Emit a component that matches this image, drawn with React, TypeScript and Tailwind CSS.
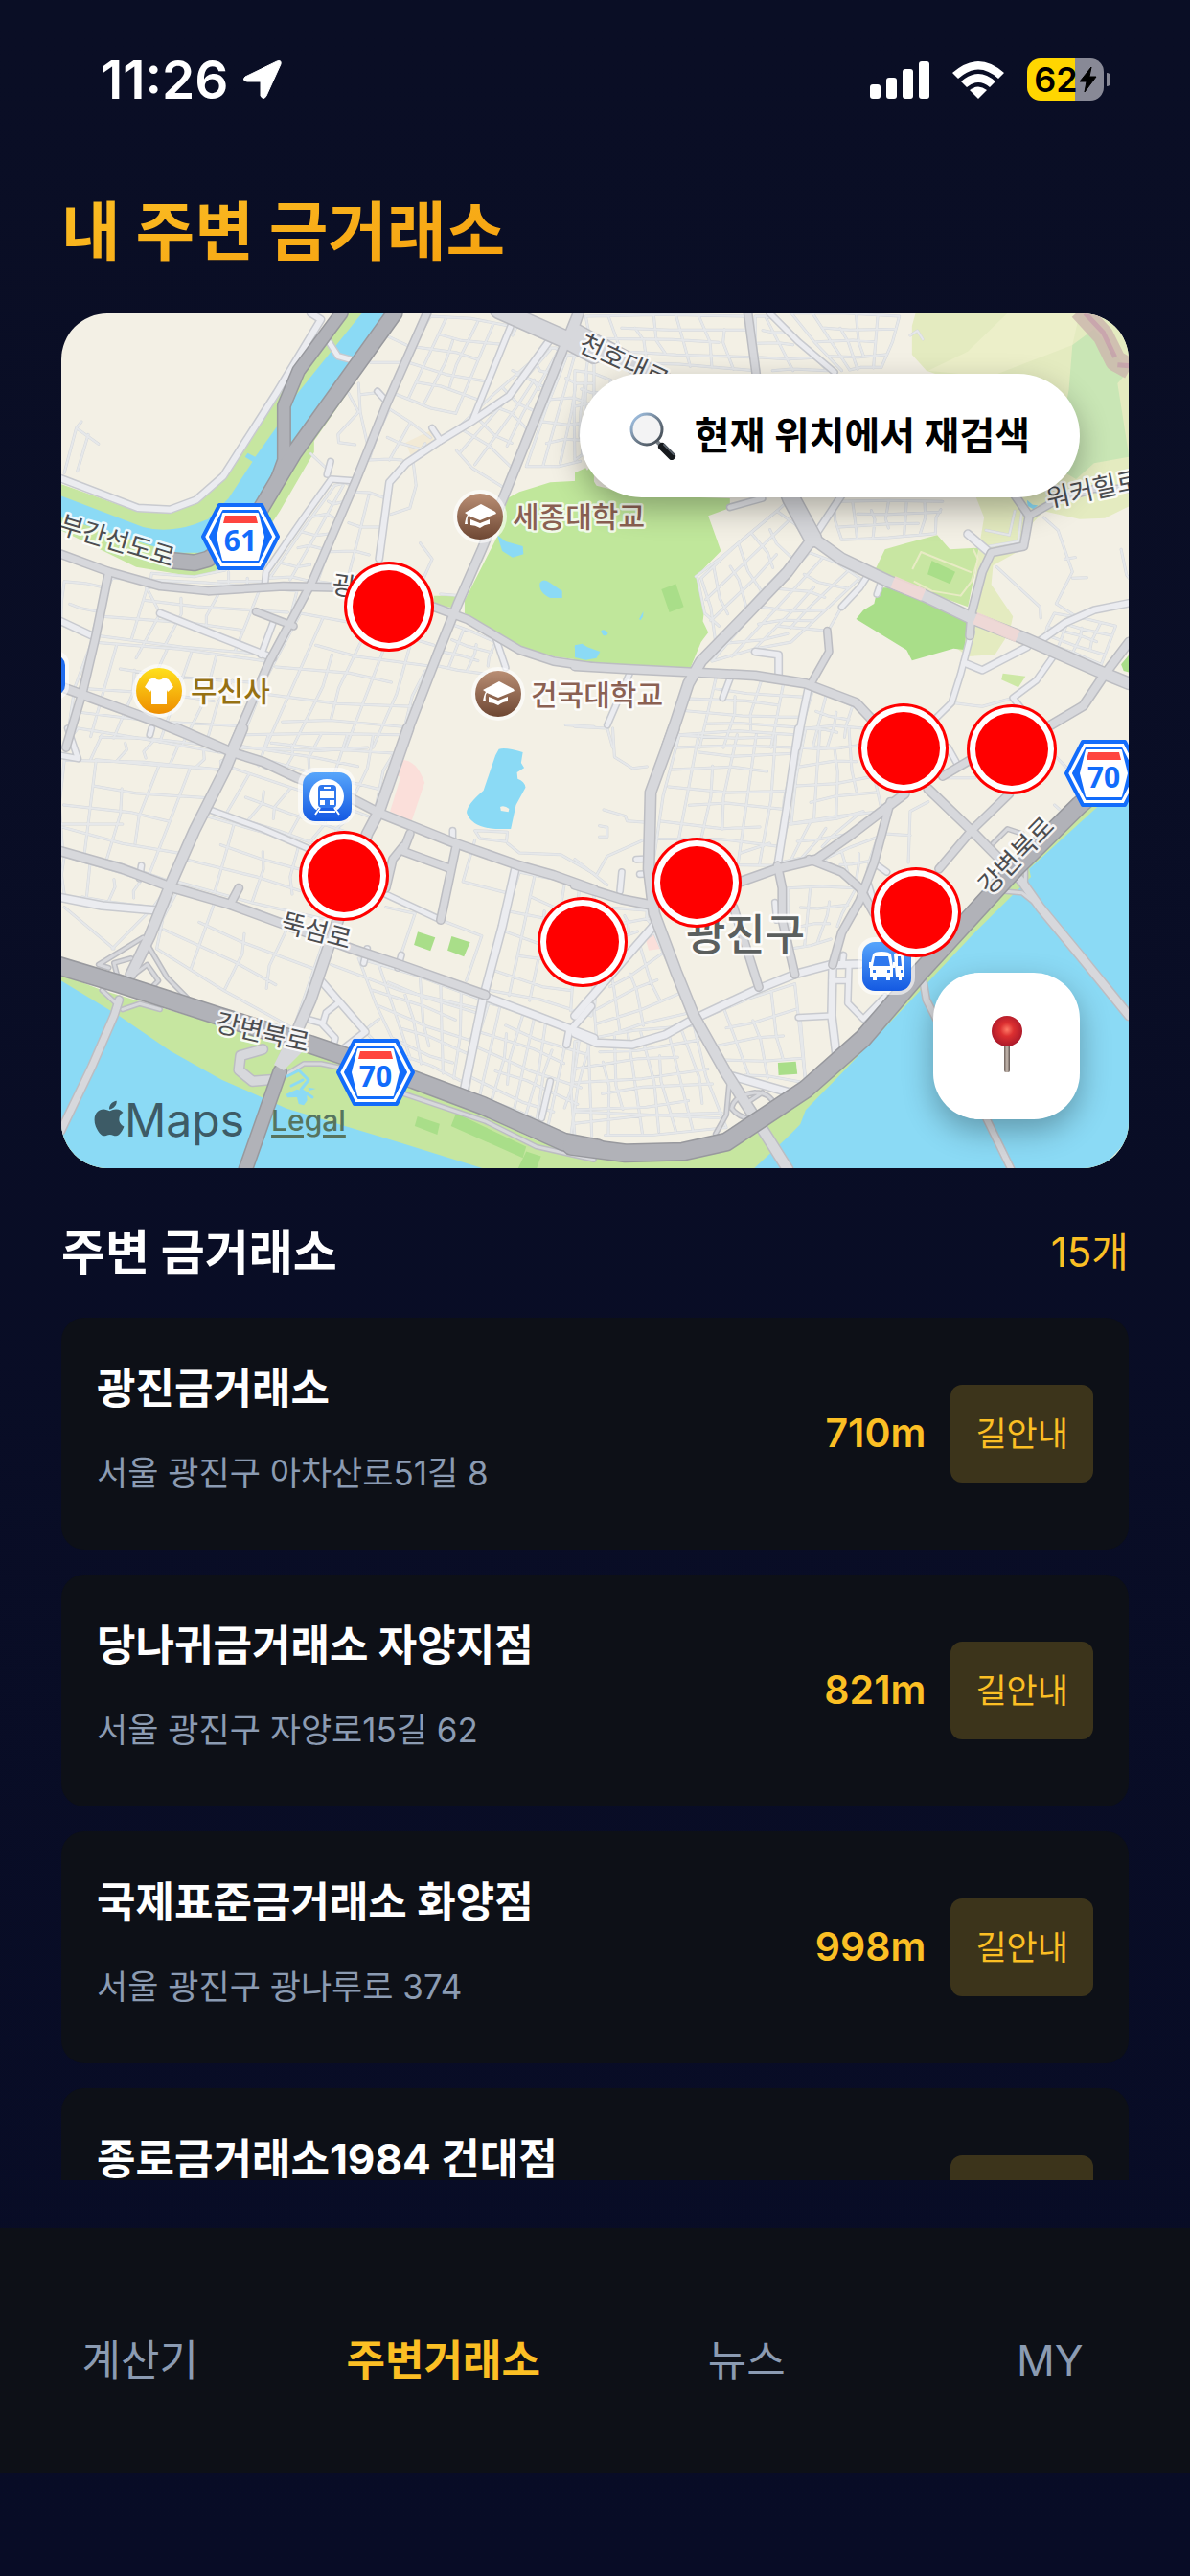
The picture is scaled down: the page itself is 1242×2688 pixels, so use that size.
import { useState } from "react";
import { FaApple } from "react-icons/fa";

type Shop = {
  name: string;
  address: string;
  distance: string;
};

type Road = [path: string, width: number];

// four corners (clockwise), then the number of columns and rows of streets
type Block = [number, number, number, number, number, number, number, number, number, number];

type Tile = {
  id: string;
  transform: string;
  areas: [path: string, color: string][];
  blocks: Block[];
  lanes: string[];
  light: Road[];
  main: Road[];
  highway: Road[];
  special?: [path: string, color: string, width: number][];
};

const SHOPS: Shop[] = [
  { name: "광진금거래소", address: "서울 광진구 아차산로51길 8", distance: "710m" },
  { name: "당나귀금거래소 자양지점", address: "서울 광진구 자양로15길 62", distance: "821m" },
  { name: "국제표준금거래소 화양점", address: "서울 광진구 광나루로 374", distance: "998m" },
  { name: "종로금거래소1984 건대점", address: "", distance: "" },
];

const TABS = ["계산기", "주변거래소", "뉴스", "MY"];

const LAND = "#f3f0e5";
const WATER = "#8bdaf5";
const BANK = "#c6e6a0";
const PARK = "#c0e79b";
const FIELD = "#a9de89";
const PINK = "#fbdfda";

const TILES: Tile[] = [
  {
    id: "nw",
    transform: "translate(-4 -7) scale(0.3571 0.3333)",
    areas: [
      ["M10 555L230 640L330 645L410 610L490 540L650 270L810 20L1010 20L750 420L750 455L650 640L600 720L540 780L460 828L400 845L230 815L10 700Z", BANK],
      ["M10 592L250 690Q320 710 400 682L440 665L500 600L570 485L548 470L556 458L578 470L645 370L680 300L890 20L960 20L680 430L640 530L590 620L440 770L340 770L10 660Z", WATER],
      ["M1568 490L1520 545L1440 550L1350 580L1315 600L1290 710L1190 920L1190 960L1340 1060L1450 1095L1568 1112Z", PARK],
      ["M1100 905L1168 905L1150 942L1100 930Z", BANK],
      ["M1285 715L1310 735L1360 750L1362 775L1330 785L1300 765Z", WATER],
      ["M1410 865Q1420 848 1440 865L1475 890L1475 912L1440 912Q1405 895 1410 865Z", WATER],
      ["M1510 1065L1530 1055L1568 1060L1568 1104L1530 1095Z", WATER],
      ["M1018 425L1090 388L1102 422L1032 464Z", "#f2ead6"],
    ],
    blocks: [
      [20, 860, 140, 880, 100, 1030, 10, 990, 1, 2],
      [160, 850, 700, 890, 620, 1090, 115, 1030, 5, 3],
      [100, 1050, 610, 1110, 500, 1380, 30, 1340, 7, 4],
      [710, 960, 1100, 1060, 1000, 1380, 530, 1380, 6, 5],
      [1090, 30, 1320, 60, 1210, 350, 980, 270, 5, 5],
      [1430, 130, 1470, 150, 1310, 570, 1130, 420, 4, 7],
      [1490, 150, 1568, 180, 1568, 480, 1370, 500, 4, 5],
      [970, 320, 1090, 410, 1030, 480, 910, 480, 2, 2],
      [810, 560, 860, 560, 740, 860, 620, 850, 2, 6],
      [860, 580, 960, 600, 930, 870, 760, 860, 2, 3],
      [1140, 990, 1280, 1050, 1250, 1150, 1090, 1120, 3, 3],
    ],
    lanes: [
      "M20 520L55 380L120 430M55 380L70 360M90 400L58 515",
      "M880 240L885 330L910 450M885 275L945 268M850 270L880 330L820 400L822 425L870 432",
      "M915 175L1025 175M960 90L1040 130M740 460L790 510",
      "M270 880L275 835L400 845L490 825",
      "M1040 490L1048 560L1030 630L975 650M1060 740L1095 790L1070 850M1120 900L1180 905",
      "M260 880L300 960L230 1100M470 860L600 860M500 830L500 880M555 850L555 880",
      "M1330 200L1420 250M1360 20L1330 90M1500 60L1568 90",
      "M1485 1310L1568 1315",
    ],
    light: [
      ["M10 538L235 630L330 635L405 605L485 530L640 270L770 40L740 20", 7],
      ["M790 105L820 155L865 168", 6],
      ["M1435 110L1320 280L1210 360L1110 425L1020 490L970 550L940 790", 7],
      ["M1325 60L1215 350", 6],
      ["M865 545L800 540L720 660L610 830L605 880", 6],
      ["M10 985L110 1035", 7],
      ["M300 960L630 1100", 7],
      ["M630 990L595 1090", 6],
      ["M1280 1035L1310 1130", 6],
      ["M1095 380L1120 420M935 265L965 300M798 485L788 525", 6],
    ],
    main: [
      ["M1290 10L1480 100L1568 150", 18],
      ["M1080 20L960 310L870 550L745 860L700 950L620 1110L510 1380", 8],
      ["M10 775L150 830L300 875L440 890L660 875L850 880L960 900L1100 940L1200 980L1350 1075L1450 1110L1568 1128", 8],
      ["M1520 20L1475 140L1310 580L1240 760L1170 930L1110 1090L1005 1380", 9],
      ["M150 830L110 1040L75 1200L25 1380", 8],
      ["M10 1190L290 1300L470 1380", 9],
      ["M580 955L690 1000", 7],
    ],
    highway: [
      ["M830 20L705 200L662 310L662 480L640 545", 13],
      ["M985 20L690 460L590 640L540 720L440 790L400 802L340 795", 16],
    ],
  },
  {
    id: "ne",
    transform: "translate(536 -7) scale(0.3763 0.3333)",
    areas: [
      ["M945 20L1537 20L1537 625L1470 662L1400 665L1300 640L1260 690L1240 760L1160 810L1155 870L1215 970L1205 1020L1165 1090L1090 1095L1060 1070L1100 940L1120 760L1135 660L1100 560L1050 230L975 200L935 150L935 60Z", "#e4ebc0"],
      ["M1200 20L1400 20L1380 120L1150 220L980 200L1090 140Z", "#ecefc9"],
      ["M1380 120L1440 70L1537 200L1505 240L1537 470L1440 490L1390 540L1330 500L1370 260Z", "#c9e6b5"],
      ["M0 520L30 505L60 560L160 590L430 600L430 630L370 655L405 765L335 845L360 940L355 985L370 1020L350 1050L320 1132L0 1112Z", PARK],
      ["M240 885L280 868L302 940L262 957Z", FIELD],
      ["M0 1060L20 1055L35 1066L70 1080L60 1100L30 1106L0 1098Z", WATER],
      ["M72 1016Q80 1006 92 1022Q88 1034 78 1028Z", WATER],
      ["M178 978L190 954L189 970L182 982Z", WATER],
      ["M860 760L920 740L1005 715L1040 760L1120 755L1110 830L1090 940L1030 915L960 885L830 830Z", "#c8e6a2"],
      ["M990 795L1055 830L1040 868L978 838Z", FIELD],
      ["M840 880L900 880L960 905L1090 970L1080 1074L1050 1070L935 1108L920 1075L780 978L800 950L830 930Z", FIELD],
      ["M1187 1148L1250 1157L1230 1192L1183 1168Z", "#cde8a5"],
      ["M1254 605L1270 620L1284 622L1272 634L1256 624Z", WATER],
      ["M1537 1090L1515 1120L1522 1140L1537 1145Z", FIELD],
    ],
    blocks: [
      [30, 30, 470, 30, 500, 200, 80, 170, 7, 4],
      [500, 30, 560, 40, 700, 200, 510, 200, 2, 4],
      [600, 20, 900, 30, 850, 190, 740, 200, 5, 4],
      [0, 200, 100, 230, 60, 420, 0, 480, 3, 5],
      [560, 640, 650, 740, 390, 1050, 350, 850, 3, 6],
      [650, 770, 790, 850, 600, 1050, 380, 1110, 4, 6],
      [720, 610, 1020, 610, 1000, 710, 740, 730, 6, 3],
      [330, 1150, 640, 1190, 610, 1380, 280, 1380, 5, 6],
      [660, 1200, 770, 1250, 740, 1380, 620, 1380, 3, 3],
      [1330, 960, 1500, 1000, 1460, 1120, 1300, 1050, 4, 4],
    ],
    lanes: [
      "M340 850L360 960L400 1000M335 845L400 790L560 640L640 560",
      "M1300 660L1340 700L1380 830L1335 930L1390 970M1170 815L1290 940L1292 975M1360 790L1388 785M1380 850L1420 848M1515 760L1530 840L1537 850",
      "M930 90L950 75L965 102M740 940L700 1020M560 1000L700 1015",
      "M0 1315L90 1320L105 1380M1045 1240L1130 1252L1215 1225",
      "M1140 700L1205 715L1220 640M1150 750L1230 735L1240 640",
    ],
    light: [
      ["M540 20L620 110L720 205", 6],
      ["M670 710L740 590", 7],
      ["M430 628L520 600", 6],
      ["M1090 712L1150 770", 8],
      ["M1080 1115L1130 1138L1255 1065", 7],
      ["M1325 1098L1280 1170L1215 1225L1240 1260", 6],
      ["M1285 1050L1360 990L1440 950L1537 928", 7],
      ["M812 842L790 880L740 940M850 860L838 900", 6],
      ["M500 1080L565 1090L565 1160", 7],
      ["M430 1165L410 1225M155 1140L90 1310", 6],
      ["M650 1180L630 1290L615 1380", 7],
      ["M1100 1020L1070 1150L1045 1240L1000 1290", 6],
    ],
    main: [
      ["M0 80L260 240L560 480L600 600L660 725", 18],
      ["M480 20L505 230", 8],
      ["M0 70L15 20", 7],
      ["M660 725L590 830L480 960L350 1110L315 1180L280 1300L255 1380", 11],
      ["M660 725L740 790L870 860L970 905L1090 970L1250 1040L1450 1140L1537 1180", 12],
      ["M0 1125L150 1135L330 1145L500 1155L640 1180L780 1240L830 1300", 9],
      ["M1100 960L1130 830L1155 770L1245 750L1260 655L1220 590", 8],
      ["M1260 655L1330 610L1440 570L1537 570", 7],
      ["M1100 960L1095 1030", 8],
      ["M1537 1050L1470 1150L1410 1250L1320 1310", 9],
      ["M700 1015L705 1080L655 1180", 7],
    ],
    highway: [],
    special: [
      ["M1400 10L1465 90L1500 170L1540 195", "#cdb9ae", 22],
      ["M1415 20L1465 80L1498 158M1505 182L1537 185", "#c59aaa", 5],
      ["M882 862L967 902M1110 975L1228 1032", "#f3d9d5", 13],
      ["M936 822L960 768L1100 832M1105 760L1118 790L1100 860L1070 905L990 890L940 860", "#eeeccb", 2],
    ],
  },
  {
    id: "sw",
    transform: "translate(-4 433) scale(0.3571 0.3333)",
    areas: [
      ["M10 770L130 820L700 1000L1100 1140L1400 1290L1568 1350L1568 1380L10 1380Z", BANK],
      ["M10 790L180 900L330 1010L480 1100L670 1190L980 1290L1250 1380L10 1380Z", WATER],
      ["M1165 1205L1370 1310L1360 1345L1150 1245Z", FIELD],
      ["M1052 1215L1117 1238L1110 1272L1044 1245Z", FIELD],
      ["M1370 1325L1413 1340L1400 1380L1345 1380Z", FIELD],
      ["M1053 637L1104 655L1090 697L1042 678Z", FIELD],
      ["M1152 651L1206 670L1188 715L1140 695Z", FIELD],
      ["M1005 98Q1050 98 1073 170L1035 290L972 260L1003 152L988 145Z", PINK],
      ["M1290 65Q1310 58 1360 75L1355 108L1364 124L1343 138L1345 158Q1365 165 1368 185L1340 240L1325 315L1280 315Q1210 310 1196 265Q1195 240 1245 195L1280 85Z", WATER],
      ["M1294 246Q1306 240 1320 252L1318 262L1296 258Z", LAND],
      ["M668 1145L700 1130L728 1140L730 1165L720 1180L705 1176L700 1155L672 1156Z", WATER],
      ["M732 1124L755 1128L736 1134Z", WATER],
    ],
    blocks: [
      [60, 0, 500, 80, 480, 130, 20, 90, 6, 1],
      [20, 100, 480, 130, 330, 480, 15, 380, 5, 4],
      [540, 20, 1000, 20, 930, 250, 520, 90, 6, 4],
      [500, 120, 920, 280, 860, 400, 430, 250, 7, 2],
      [420, 270, 800, 400, 790, 600, 350, 480, 4, 3],
      [20, 400, 320, 500, 280, 560, 20, 520, 4, 1],
      [350, 510, 780, 660, 690, 940, 290, 690, 4, 3],
      [880, 720, 1240, 850, 1190, 1110, 1000, 1020, 6, 6],
      [1260, 860, 1560, 970, 1500, 1280, 1200, 1140, 9, 6],
      [1350, 450, 1568, 520, 1560, 900, 1260, 820, 5, 6],
    ],
    lanes: [
      "M20 560L165 690M280 560L160 690M10 300L190 300M1220 320L1315 325L1312 355L1235 345ZM1220 350L1185 480L1330 520",
      "M1315 360L1350 390L1470 395L1568 455M1120 600L1240 650M1240 650L1195 790",
      "M800 740L1000 820L1240 880M940 910L880 960M900 950L1000 1060",
      "M960 560L1045 580L1000 720",
    ],
    light: [
      ["M445 255L600 315L730 375", 6],
      ["M960 520L1120 600", 6],
      ["M10 530L130 555L290 570", 8],
      ["M770 790L900 950L840 1000", 7],
      ["M820 860L785 890L775 925M730 910L770 922L812 970L805 1000", 6],
      ["M1338 440L1300 620L1245 840L1190 1125", 8],
      ["M1250 840L1400 900L1568 970", 8],
      ["M1560 870L1495 950L1488 990", 7],
      ["M10 85L60 95L30 0M275 0L270 20M1155 320L1155 355", 6],
      ["M905 690L895 735M1005 710L995 750M245 430L240 470", 6],
      ["M1440 1105L1415 1220", 6],
    ],
    main: [
      ["M350 0L510 75L600 105L700 155L860 220L940 265L1150 355L1350 430L1450 460L1568 505", 9],
      ["M540 0L490 130L400 320L330 490L270 650L215 770", 11],
      ["M10 385L190 440L340 500L500 550L640 605L860 690L1000 740L1250 835", 9],
      ["M1025 0L940 260L905 330L860 480L800 660L740 850L695 960L660 1040", 11],
      ["M1030 330L1010 385L1150 440M1010 370L980 410L960 500M1165 370L1120 600", 8],
      ["M530 500L505 550", 8],
      ["M250 655L120 740L150 750M215 720L165 735L175 775L215 790M225 770L262 740L295 790L275 812M265 680L320 780L380 845", 4],
      ["M180 850L165 900L100 1060L10 1260", 8],
      ["M130 820L170 860M300 880L240 862L190 880", 4],
      ["M600 1005L535 1025L530 1070L570 1105L625 1100", 10],
      ["M660 1090L720 1050L770 1050L860 1070M1000 1140L1250 1230L1400 1310L1568 1350", 4],
    ],
    highway: [
      ["M0 742L180 800L470 900L740 990L1040 1100L1240 1180L1480 1295L1580 1315", 18],
      ["M650 1075L550 1380", 14],
    ],
  },
  {
    id: "se",
    transform: "translate(536 433) scale(0.3763 0.3333)",
    areas: [
      ["M1400 200L1537 100L1537 1380L0 1380L0 1330L430 1290L700 1060Z", BANK],
      ["M1450 245L1537 150L1537 1380L495 1380L590 1280L625 1240L640 1195L740 1080L950 830L1100 650L1265 465L1260 440Z", WATER],
      ["M1537 1285L1500 1330L1470 1365L1537 1380Z", "#f0edcf"],
      ["M222 635L237 690L205 695L196 660Z", PINK],
      ["M563 1047L613 1043L617 1082L565 1086Z", FIELD],
    ],
    blocks: [
      [290, 20, 610, 20, 570, 430, 220, 400, 6, 7],
      [640, 0, 800, 0, 850, 250, 600, 300, 4, 5],
      [590, 300, 850, 260, 680, 400, 570, 420, 4, 2],
      [0, 980, 330, 930, 420, 1250, 0, 1280, 9, 7],
      [60, 790, 220, 640, 320, 890, 60, 970, 4, 4],
      [350, 910, 610, 800, 640, 1110, 430, 1080, 4, 4],
      [590, 500, 780, 500, 710, 660, 600, 690, 3, 3],
      [690, 410, 840, 340, 800, 490, 740, 450, 3, 2],
      [0, 560, 200, 570, 210, 620, 30, 700, 3, 2],
    ],
    lanes: [
      "M105 0L110 90L160 125L200 120M80 255L140 275L145 290L200 295M68 305L90 310L90 340L68 340M60 460L90 400L190 350M0 410L90 490",
      "M925 420L930 260L980 230M860 330L930 335M1020 155L1110 155M1335 90L1370 130M1330 240L1345 255",
      "M460 390L540 360M0 1200L400 1220M640 1110L625 905",
    ],
    light: [
      ["M620 0L590 230L562 430", 7],
      ["M0 955L60 985L160 990L250 960L330 910L500 820L610 770L710 740L790 738", 8],
      ["M225 610L0 900", 8],
      ["M715 740L712 900L725 1020", 8],
      ["M620 905L712 900M712 790L755 790", 6],
      ["M130 450L125 510M170 410L205 408M180 457L205 455", 6],
      ["M760 745L757 860L800 910L860 840", 6],
      ["M440 1090L610 1145", 8],
      ["M815 490L835 570M840 430L865 450M745 710L742 740", 6],
      ["M1035 60L1060 110", 6],
      ["M555 545L560 600", 6],
    ],
    main: [
      ["M275 0L210 200L205 440L220 580L280 760L330 900L420 1080L500 1220L540 1290L590 1380", 11],
      ["M0 490L130 535L220 555", 9],
      ["M915 205L770 330L670 410L560 440L460 480", 9],
      ["M562 430L575 500L575 600L610 770", 8],
      ["M875 230L830 420L790 540L740 640L715 740", 8],
      ["M650 410L740 450L790 500L830 580", 8],
      ["M440 560L510 810", 8],
      ["M980 190L1100 320L1240 480L1290 560L1400 710L1537 900", 9],
      ["M1205 205L1100 320L1010 440", 8],
      ["M1020 150L1095 100", 8],
      ["M965 785L975 850L1080 1080L1210 1380", 7],
      ["M430 1090L420 1210L390 1270M500 1140Q440 1150 435 1190Q450 1215 490 1225M500 1140Q540 1140 555 1180M480 1170L520 1140", 4],
      ["M1160 360L1200 315L1240 330M1190 510L1240 515L1290 560M1250 420L1250 500", 4],
    ],
    highway: [
      ["M1545 100L1400 240L1220 440L960 760L800 970L640 1130L500 1235L420 1295L300 1325L140 1330L-10 1308", 18],
    ],
  },
];

const PINS = [
  [342, 306],
  [295, 587],
  [544, 656],
  [663, 594],
  [879, 454],
  [992, 455],
  [892, 625],
];

const ROAD_LABELS = [
  { text: "부간선도로", x: 58, y: 238, angle: 17 },
  { text: "천호대로", x: 587, y: 51, angle: 25 },
  { text: "뚝섬로", x: 266, y: 645, angle: 15 },
  { text: "강변북로", x: 210, y: 751, angle: 13 },
  { text: "강변북로", x: 997, y: 566, angle: -46 },
  { text: "워커힐로", x: 1077, y: 184, angle: -12 },
  { text: "광나루로", x: 332, y: 290, angle: 8 },
];

function blockPath([ax, ay, bx, by, cx, cy, dx, dy, cols, rows]: Block) {
  const at = (u: number, v: number) => {
    const x = (1 - v) * ((1 - u) * ax + u * bx) + v * ((1 - u) * dx + u * cx);
    const y = (1 - v) * ((1 - u) * ay + u * by) + v * ((1 - u) * dy + u * cy);
    return `${Math.round(x)} ${Math.round(y)}`;
  };
  let d = "";

  for (let i = 0; i <= cols; i++) {
    const u = i / cols;
    const bend = ((i % 3) - 1) * 0.03;
    d += `M${at(u, i % 4 === 2 ? 0.25 : 0)}L${at(u + bend, 0.5)}L${at(u, i % 5 === 3 ? 0.75 : 1)}`;
  }
  for (let j = 0; j <= rows; j++) {
    const v = j / rows;
    const bend = ((j % 2) - 0.5) * 0.06;
    d += `M${at(j % 3 === 1 ? 0.2 : 0, v)}L${at(0.5, v + bend)}L${at(j % 3 === 2 ? 0.8 : 1, v)}`;
  }
  return d;
}

function Roads({ pick, fill, edge }: { pick: (tile: Tile) => Road[]; fill: string; edge: string }) {
  return (
    <>
      {[edge, fill].map((color, pass) =>
        TILES.map((tile) => (
          <g key={`${tile.id}-${pass}`} transform={tile.transform} stroke={color}>
            {pick(tile).map(([d, width]) => (
              <path key={d} d={d} strokeWidth={pass === 0 ? width + 2 : width - 1} vectorEffect="non-scaling-stroke" />
            ))}
          </g>
        ))
      )}
    </>
  );
}

function Shield({ x, y, label }: { x: number; y: number; label: string }) {
  return (
    <g transform={`translate(${x} ${y})`} strokeLinejoin="round">
      <path d="M-39 0L-22 -33H22L39 0L22 33H-22Z" fill="#fff" stroke="#126cfb" strokeWidth="4" />
      <path d="M-32 0L-18 -27H18L32 0L18 27H-18Z" fill="#126cfb" stroke="#126cfb" strokeWidth="2" />
      <path d="M-24 0L-18 -24H18L24 0L18 24H-18Z" fill="#fff" stroke="#fff" strokeWidth="2" />
      <path d="M-16 -22H16L18 -14H-18Z" fill="#ff453f" />
      <text y="15" textAnchor="middle" fill="#126cfb" className="font-['Open_Sans',sans-serif] text-[30px] font-bold">
        {label}
      </text>
    </g>
  );
}

function SchoolIcon({ x, y }: { x: number; y: number }) {
  return (
    <g transform={`translate(${x} ${y})`}>
      <circle r="28" fill="#fff" opacity="0.6" />
      <circle r="24" fill="url(#school)" />
      <path d="M-16 -4L1 -13L16 -5L17 -3L0 4L-12 -1Q-14 1 -13 8H-16Q-15 1 -13 -2Z" fill="#fff" />
      <path d="M-10 3L0 7L10 3V8Q5 8 0 12Q-5 9 -10 9Z" fill="#fff" />
    </g>
  );
}

function TransitBox({ x, y }: { x: number; y: number }) {
  return (
    <>
      <rect x={x - 30} y={y - 30} width="60" height="60" rx="18" fill="#fff" opacity="0.6" />
      <rect x={x - 25} y={y - 25} width="51" height="51" rx="13" fill="url(#transit)" />
    </>
  );
}

function MapCanvas() {
  return (
    <svg viewBox="0 0 1114 892" preserveAspectRatio="xMidYMid slice" className="block h-full w-full" aria-hidden="true">
      <defs>
        <linearGradient id="school" x1="0" y1="0" x2="0" y2="1">
          <stop offset="0" stopColor="#b98e74" />
          <stop offset="1" stopColor="#6e4733" />
        </linearGradient>
        <linearGradient id="store" x1="0" y1="0" x2="0" y2="1">
          <stop offset="0" stopColor="#ffe01c" />
          <stop offset="1" stopColor="#ee8d00" />
        </linearGradient>
        <linearGradient id="transit" x1="0" y1="0" x2="0" y2="1">
          <stop offset="0" stopColor="#57a5fb" />
          <stop offset="1" stopColor="#1459e2" />
        </linearGradient>
      </defs>
      <rect width="1114" height="892" fill={LAND} />

      {TILES.map((tile) => (
        <g key={tile.id} transform={tile.transform}>
          {tile.areas.map(([d, color]) => (
            <path key={d} d={d} fill={color} />
          ))}
        </g>
      ))}

      <g fill="none" strokeLinejoin="round" strokeLinecap="round">
        {["#d5d8dc", "#e6e8ea"].map((color, pass) =>
          TILES.map((tile) => (
            <g key={`${tile.id}-${pass}`} transform={tile.transform} stroke={color}>
              {[...tile.blocks.map(blockPath), ...tile.lanes].map((d) => (
                <path key={d} d={d} strokeWidth={pass === 0 ? 3 : 2} vectorEffect="non-scaling-stroke" />
              ))}
            </g>
          ))
        )}
        <Roads pick={(tile) => tile.light} fill="#ebecf0" edge="#c8cacf" />
        <Roads pick={(tile) => tile.main} fill="#d7d8dc" edge="#bcbdc2" />
        {TILES.map((tile) => (
          <g key={tile.id} transform={tile.transform} opacity="0.85">
            {tile.special?.map(([d, color, width]) => (
              <path key={d} d={d} stroke={color} strokeWidth={width} strokeLinecap="butt" vectorEffect="non-scaling-stroke" />
            ))}
          </g>
        ))}
        <Roads pick={(tile) => tile.highway} fill="#b1b2b8" edge="#98999e" />
        <path d="M236 796L248 790L258 800L250 810L262 818M240 806L252 800" stroke={WATER} strokeWidth="3" />
        <path d="M222 784L240 748L258 764L232 790Z" fill="#d7d8dc" />
      </g>

      <g paintOrder="stroke" stroke="#fff" strokeOpacity="0.85" strokeWidth="5" strokeLinejoin="round" textAnchor="middle">
        {ROAD_LABELS.map(({ text, x, y, angle }) => (
          <text
            key={`${text}-${x}`}
            x={x}
            y={y}
            dy="9"
            transform={`rotate(${angle} ${x} ${y})`}
            fill="#4c4d50"
            className="text-[27px]"
          >
            {text}
          </text>
        ))}
        <text x="714" y="665" fill="#5b5f5e" className="text-[45px] font-medium">
          광진구
        </text>
      </g>

      <g paintOrder="stroke" stroke="#fff" strokeOpacity="0.8" strokeWidth="5" strokeLinejoin="round" className="text-[30px] font-medium">
        <text x="471" y="223" fill="#8a6052">세종대학교</text>
        <text x="490" y="409" fill="#8a6052">건국대학교</text>
        <text x="135" y="405" fill="#967113">무신사</text>
      </g>

      <SchoolIcon x={437} y={212} />
      <SchoolIcon x={456} y={397} />
      <circle cx="102" cy="394" r="28" fill="#fff" opacity="0.6" />
      <circle cx="102" cy="394" r="24" fill="url(#store)" />
      <path d="M97 380Q102 385 107 380L112 382L117 390L111 395L110 393V408H94V393L93 395L87 390L92 382Z" fill="#fff" />

      <rect x="-40" y="352" width="48" height="51" rx="14" fill="#fff" opacity="0.6" />
      <rect x="-40" y="357" width="44" height="41" rx="10" fill="#1f6bee" />

      <TransitBox x={277} y={504} />
      <circle cx="277" cy="504" r="18" fill="#fff" />
      <path d="M261 526L268 516H286L293 526Z" fill="#1d61e6" />
      <rect x="268" y="492" width="19" height="24" rx="4" fill="#3078ee" />
      <path d="M274 494H281V496H274ZM270 498H285V506H270Z" fill="#fff" />
      <path d="M271 509H274V512H271ZM281 509H284V512H281ZM270 516L265 523M285 516L290 523M269 520H286" fill="#fff" stroke="#fff" strokeWidth="2" />

      <TransitBox x={861} y={681} />
      <path
        d="M869 669Q870 667 874 667Q878 668 879 671L880 683V692H877V696H874V692H871Z"
        fill="#fff"
      />
      <path d="M847 669Q848 666 856 666Q864 666 866 669L868 681V692H865V696H861V692H851V696H847V692H844V681ZM843 677H845V683H843ZM868 677H870V683H868Z" fill="#fff" />
      <path d="M849 671H863L865 681H847ZM847 685H850V688H847ZM862 685H865V688H862ZM873 671H876L877 681H873ZM876 685H878V688H876Z" fill="#2f78ee" />

      <Shield x={187} y={233} label="61" />
      <Shield x={328} y={792} label="70" />
      <Shield x={1088} y={480} label="70" />

      {PINS.map(([x, y]) => (
        <g key={`${x}-${y}`}>
          <circle cx={x} cy={y} r="47" fill="#f00" />
          <circle cx={x} cy={y} r="44" fill="#fff" />
          <circle cx={x} cy={y} r="38" fill="#f00" />
        </g>
      ))}
    </svg>
  );
}

function MagnifierIcon() {
  return (
    <svg viewBox="0 0 50 50" className="size-[50px]" aria-hidden="true">
      <defs>
        <linearGradient id="rim" x1="0" y1="0" x2="1" y2="1">
          <stop offset="0" stopColor="#a9cdf2" />
          <stop offset="0.5" stopColor="#6f7f90" />
          <stop offset="1" stopColor="#3c4248" />
        </linearGradient>
      </defs>
      <path d="M29 31L33 35" stroke="#7b8288" strokeWidth="4" />
      <path d="M34 36L44 46" stroke="#16191d" strokeWidth="8" strokeLinecap="round" />
      <path d="M36 34L46 44" stroke="#59616b" strokeWidth="2" strokeLinecap="round" />
      <circle cx="18" cy="18" r="16" fill="#f3f3f4" stroke="url(#rim)" strokeWidth="3" />
    </svg>
  );
}

function PinIcon() {
  return (
    <svg viewBox="0 0 32 66" className="h-[66px] w-8" aria-hidden="true">
      <defs>
        <radialGradient id="ball" cx="0.5" cy="0.45" r="0.55">
          <stop offset="0" stopColor="#ff7a66" />
          <stop offset="0.4" stopColor="#dc2f30" />
          <stop offset="1" stopColor="#a9182a" />
        </radialGradient>
        <linearGradient id="needle" x1="0" y1="0" x2="1" y2="0">
          <stop offset="0" stopColor="#6d605a" />
          <stop offset="0.5" stopColor="#c9bcb2" />
          <stop offset="1" stopColor="#5f5450" />
        </linearGradient>
      </defs>
      <rect x="13" y="30" width="6" height="30" rx="2" fill="url(#needle)" />
      <circle cx="16" cy="17" r="16" fill="url(#ball)" />
    </svg>
  );
}

function StatusBar() {
  return (
    <div className="flex h-[166px] shrink-0 items-center justify-between pr-[83px] pl-[105px]">
      <div className="flex items-center gap-[14px]">
        <span className="text-[55px] leading-none font-semibold">11:26</span>
        <svg viewBox="0 0 42 42" className="size-[42px]" aria-hidden="true">
          <path
            d="M3 18L36 2Q41 0 40 5L25 38Q22 43 19 38V23H5Q-1 22 3 18Z"
            fill="#fff"
            stroke="#fff"
            strokeLinejoin="round"
          />
        </svg>
      </div>

      <div className="flex items-center gap-6">
        <svg viewBox="0 0 62 40" className="h-10 w-[62px]" fill="#fff" aria-hidden="true">
          <rect x="0" y="25" width="11" height="15" rx="3" />
          <rect x="17" y="18" width="11" height="22" rx="3" />
          <rect x="34" y="9" width="11" height="31" rx="3" />
          <rect x="51" y="1" width="11" height="39" rx="3" />
        </svg>
        <svg viewBox="0 0 54 40" className="h-10 w-[54px]" fill="#fff" aria-hidden="true">
          <path d="M0 13Q27 -11 54 13L48 19Q27 0 6 19Z" />
          <path d="M9 22Q27 6 45 22L39 28Q27 18 15 28Z" />
          <path d="M18 31Q27 24 36 31L27 40Z" />
        </svg>
        <div className="flex items-center gap-[3px]">
          <div className="flex h-11 w-20 items-center justify-center gap-px rounded-[14px] bg-[linear-gradient(90deg,#ffd600_62%,#888996_62%)] text-black">
            <span className="text-[36px] leading-none font-semibold">62</span>
            <svg viewBox="0 0 19 28" className="h-7 w-[19px]" aria-hidden="true">
              <path d="M13 1L1 16H8L6 27L18 11H11Z" stroke="#000" strokeLinejoin="round" />
            </svg>
          </div>
          <div className="h-[14px] w-1 rounded-r-full bg-[#888996]" />
        </div>
      </div>
    </div>
  );
}

export default function App() {
  const [activeTab, setActiveTab] = useState("주변거래소");

  return (
    <div className="flex h-screen flex-col bg-gradient-to-b from-[#0a0e25] to-[#080c26] font-['Inter','Noto_Sans_CJK_KR',sans-serif] text-white">
      <StatusBar />

      <main className="flex min-h-0 flex-1 flex-col px-16">
        <h1 className="mt-[26px] mb-[35px] w-fit bg-gradient-to-br from-[#fbbf24] to-[#f59e0b] bg-clip-text text-[67px] leading-[100px] font-bold text-transparent">
          내 주변 금거래소
        </h1>

        <section className="relative aspect-[1114/892] w-full shrink-0 overflow-hidden rounded-[48px]">
          <MapCanvas />

          <button
            type="button"
            className="absolute top-[63px] right-[51px] flex h-[129px] items-center gap-[18px] rounded-full bg-white px-[52px] text-[40px] font-bold whitespace-nowrap text-black shadow-[0_12px_32px_rgba(0,0,0,0.3)]"
          >
            <MagnifierIcon />
            현재 위치에서 재검색
          </button>

          <button
            type="button"
            aria-label="내 위치"
            className="absolute right-[51px] bottom-[51px] flex size-[153px] items-center justify-center rounded-[48px] bg-white shadow-[0_12px_32px_rgba(0,0,0,0.3)]"
          >
            <PinIcon />
          </button>

          <div className="absolute bottom-[20px] left-[34px] flex items-center gap-7 text-[#3d5b66]">
            <span className="flex items-center text-[48px] leading-[60px]">
              <FaApple className="mb-1 h-[42px] w-8" aria-hidden="true" />
              Maps
            </span>
            <a href="#legal" className="text-[30px] font-medium text-[#56745f] underline decoration-[3px] underline-offset-4">
              Legal
            </a>
          </div>
        </section>

        <div className="mt-[58px] mb-[38px] flex shrink-0 items-center justify-between leading-[60px]">
          <h2 className="text-[50px] font-bold">주변 금거래소</h2>
          <p className="text-[42px] text-[#fbbf24]">15개</p>
        </div>

        <ul className="flex min-h-0 flex-1 flex-col gap-[26px] overflow-y-auto [scrollbar-width:none]">
          {SHOPS.map((shop) => (
            <li
              key={shop.name}
              className="flex shrink-0 items-center justify-between rounded-3xl bg-[#0d1017] px-[37px] py-[50px]"
            >
              <div>
                <h3 className="mb-[34px] text-[44px] leading-[48px] font-bold">{shop.name}</h3>
                <p className="min-h-[60px] text-[35px] leading-[60px] text-[#8b9bb2]">{shop.address}</p>
              </div>

              <div className="flex items-center gap-[26px]">
                <span className="text-[41px] font-semibold text-[#fbbf24]">{shop.distance}</span>
                <button
                  type="button"
                  className="h-[102px] rounded-xl bg-[#3c341b] px-[26px] text-[35px] text-[#fbbf24]"
                >
                  길안내
                </button>
              </div>
            </li>
          ))}
        </ul>
      </main>

      <nav className="mt-[50px] mb-[108px] grid h-[255px] shrink-0 grid-cols-4 gap-6 bg-[#0d1017] pt-5 text-[44px]">
        {TABS.map((tab) => (
          <button
            key={tab}
            type="button"
            onClick={() => setActiveTab(tab)}
            className={tab === activeTab ? "font-bold text-[#fbbf24]" : "text-[#8b9bb2]"}
          >
            {tab}
          </button>
        ))}
      </nav>
    </div>
  );
}
